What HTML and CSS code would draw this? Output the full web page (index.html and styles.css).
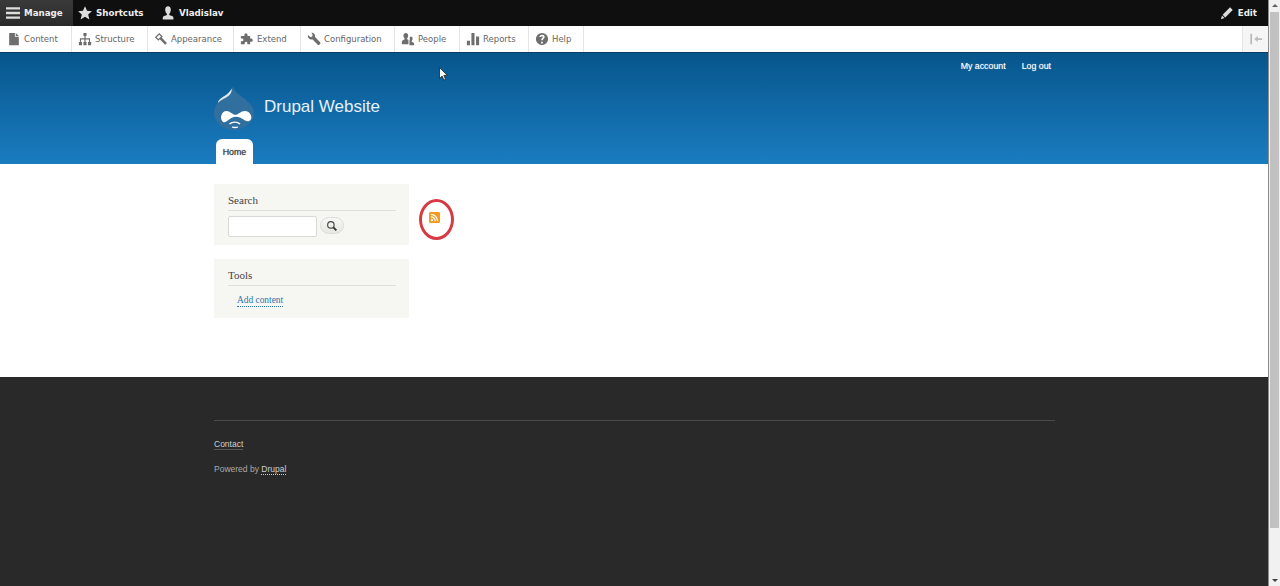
FILE: index.html
```html
<!DOCTYPE html>
<html lang="en">
<head>
<meta charset="utf-8">
<title>Drupal Website</title>
<link rel="stylesheet" href="styles.css">
</head>
<body>
<div class="viewport">
  <div class="page">
    <div class="toolbar">
      <a class="tb-item tb-manage"><svg class="tb-icon" viewBox="0 0 16 16"><path d="M0 1.500h16v2.600H0zM0 6.700h16v2.600H0zM0 11.900h16v2.600H0z"/></svg>Manage</a>
      <a class="tb-item tb-short"><svg class="tb-icon" viewBox="0 0 16 16"><path d="M8 .3l2.300 5.200 5.600.5-4.300 3.700 1.400 5.600L8 12.400l-5 2.900 1.400-5.600L.1 6l5.600-.5z"/></svg>Shortcuts</a>
      <a class="tb-item tb-user"><svg class="tb-icon" viewBox="0 0 16 16"><path d="M8 .3c2 0 3.200 1.500 3.200 3.900 0 1.900-.8 3.800-1.700 4.600v1.400c1 .6 4 1 4.500 2.400.2.700.2 1.600.2 2.700H2c0-1.100 0-2 .2-2.700.5-1.400 3.500-1.800 4.500-2.400V8.800C5.600 8 4.800 6.100 4.800 4.200 4.800 1.800 6 .3 8 .3z"/></svg>Vladislav</a>
      <a class="tb-item tb-edit"><svg class="tb-icon" viewBox="0 0 16 16"><path d="M11.500 1.500l3 3-8.500 8.500-3-3zM2.300 10.800l2.900 2.900L1 15z"/></svg>Edit</a>
    </div>
    <nav class="tray">
      <a class="tray-item"><svg class="tray-icon" viewBox="0 0 16 16"><path d="M2.500 1h6.500v4.500h4.500V15h-11zM10 1l3.500 3.500H10z"/></svg>Content</a>
      <a class="tray-item"><svg class="tray-icon" viewBox="0 0 16 16"><path d="M6.200 1h3.600v3.600H8.700v2.600h5.100v4.200H15V15h-3.600v-3.600h1.100V8.500H8.700v2.900h1.100V15H6.200v-3.600h1.100V8.500H3.500v2.900h1.100V15H1v-3.600h1.200V7.200h5.100V4.600H6.200z"/></svg>Structure</a>
      <a class="tray-item"><svg class="tray-icon" viewBox="0 0 16 16"><path d="M1 6l5-5 4 4-1.300 1.300L14.800 12.500 12.700 14.700 6.600 8.400 5 10z" fill-rule="evenodd"/><path class="tray-cut" d="M3 6l3-3 2 2-3 3z"/></svg>Appearance</a>
      <a class="tray-item"><svg class="tray-icon" viewBox="0 0 16 16"><path d="M1 4.500h4V3.200a1.800 1.800 0 1 1 3.600 0v1.300h3v3h1.200a1.800 1.800 0 1 1 0 3.600h-1.200v3H8.400v-1.500a1.500 1.500 0 1 0-3 0v1.500H1v-3.400h1.200a1.700 1.700 0 1 0 0-3.400H1z"/></svg>Extend</a>
      <a class="tray-item"><svg class="tray-icon" viewBox="0 0 16 16"><path d="M5 .8c2.300-.4 4.300 1.300 4.200 3.600 0 .4-.1.700-.2 1l6 6.300c.5.600.5 1.400 0 1.900l-.9.900c-.5.500-1.300.5-1.800 0L6.100 8.300c-2.300.8-5-.9-5.200-3.500 0-.5 0-1 .2-1.400l2.600 2.400 2.200-.4.500-2.200z"/></svg>Configuration</a>
      <a class="tray-item"><svg class="tray-icon" viewBox="0 0 16 16"><path d="M5.500 1c1.700 0 2.700 1.300 2.700 3 0 1.400-.6 2.700-1.300 3.300v1c.5.300 1 .5 1.600.7v5H1V11c0-1.300 2.300-1.800 3.200-2.700V7.300C3.400 6.600 2.800 5.400 2.800 4c0-1.700 1-3 2.700-3zM11 5c1.400 0 2.300 1.100 2.300 2.500 0 1.100-.5 2.100-1.100 2.700v.8c.8.500 2.800.9 2.800 2v2H9.700V9.500c.1-.4.300-.7.500-.9-.5-1.800-.2-3.600.8-3.600z"/></svg>People</a>
      <a class="tray-item"><svg class="tray-icon" viewBox="0 0 16 16"><path d="M1 10h3.500v5H1zM6.200 1h3.500v14H6.200zM11.500 5H15v10h-3.500z"/></svg>Reports</a>
      <a class="tray-item"><svg class="tray-icon" viewBox="0 0 16 16"><path fill-rule="evenodd" d="M8 1a7 7 0 1 1 0 14A7 7 0 0 1 8 1zM7 11v2h2v-2zM8 3C6.300 3 5 4 5 5.800h2c0-.6.400-1 1-1s1 .4 1 .9c0 1-2 1.300-2 3.500v.3h2v-.3c0-1.200 2-1.600 2-3.700C11 4 9.700 3 8 3z"/></svg>Help</a>
      <span class="tray-space"></span>
      <a class="tray-toggle"><svg viewBox="0 0 16 16" class="tray-toggle-icon"><path d="M1.500 2h2v12h-2zM6 8l4-3.500V7h5v2h-5v2.500z"/></svg></a>
    </nav>
    <header class="site-header">
      <div class="wrap">
        <div class="secondary"><a>My account</a><a>Log out</a></div>
        <div class="branding">
          <svg class="logo" viewBox="0 0 40 44"><path fill="#316f9f" d="M19 0C20 6 26 9 31 13 36 17 40 22 40 27 40 36 31 44 20 44 9 44 0 36 0 27 0 20 5 14 11 11 15 8 18 5 19 0z"/><path fill="#dbe9f3" d="M17.500 2.500C16 6 13 8.500 9.500 10.500 6.500 12.300 4 14.500 3.800 17 7 13.500 11.500 12.500 15 9.500 17 7.800 18.300 5 17.500 2.500z"/><path fill="#fff" d="M9 36C5 32.500 7.500 25 12.500 25c3.500 0 6 3.800 9 3.800 2.800 0 5-3.800 9.500-3.800 5 0 8 6 5.500 9-1.700 2.200-4.500 1.400-7-.4-2-1.500-5-2.800-7.500-2.800-3 0-5.500 1.700-7.500 3.300C12.500 35.700 10.500 37 9 36z"/><path fill="none" stroke="#fff" stroke-width="1.300" d="M15.500 38c2.700-2.600 8-2.600 10.500 0M18 41c2 .7 4 .7 6 0"/></svg>
          <span class="site-name">Drupal Website</span>
        </div>
        <div class="tabs"><a class="tab">Home</a></div>
      </div>
    </header>
    <main class="content">
      <div class="wrap columns">
        <aside class="sidebar">
          <section class="block block-search">
            <h2 class="block-title">Search</h2>
            <form class="search">
              <span class="search-input"></span>
              <span class="search-btn"><svg viewBox="0 0 16 16" class="search-icon"><circle cx="6.500" cy="6.500" r="4.300" fill="none" stroke="#444" stroke-width="1.500"/><path d="M9.800 9.800l4 4" stroke="#333" stroke-width="2.400"/></svg></span>
            </form>
          </section>
          <section class="block">
            <h2 class="block-title">Tools</h2>
            <a class="tool-link">Add content</a>
          </section>
        </aside>
        <div class="feed">
          <svg class="rss" viewBox="0 0 12 12"><rect width="12" height="12" rx="1.500" fill="#f39a1f"/><circle cx="3.200" cy="8.800" r="1.300" fill="#fff"/><path d="M2 5.200a4.800 4.800 0 0 1 4.800 4.800M2 2.600A7.400 7.400 0 0 1 9.400 10" fill="none" stroke="#fff" stroke-width="1.400"/></svg>
          <span class="ring"></span>
        </div>
      </div>
    </main>
    <footer class="site-footer">
      <div class="wrap">
        <div class="foot-rule"></div>
        <div class="foot-menu"><a>Contact</a></div>
        <div class="foot-power">Powered by <a>Drupal</a></div>
      </div>
    </footer>
    <svg class="cursor" viewBox="0 0 9 14"><path d="M.5.500v11l2.600-2.400 1.800 4 1.700-.8-1.800-3.900H8.300z" fill="#fff" stroke="#222" stroke-width=".8"/></svg>
  </div>
  <div class="scrollbar">
    <span class="sb-arrow sb-up"></span>
    <span class="sb-thumb"></span>
    <span class="sb-arrow sb-down"></span>
  </div>
</div>
</body>
</html>
```
FILE: styles.css
```css
* { box-sizing: border-box; }
html, body { margin: 0; height: 586px; overflow: hidden; }
body { font-family: "Liberation Sans", Arial, sans-serif; background: #fff; }
a { color: inherit; text-decoration: none; }

.viewport { display: flex; width: 1280px; height: 586px; }
.page { position: relative; flex: 0 0 1269px; display: flex; flex-direction: column; height: 586px; overflow: hidden; border-right: 1px solid #8c8c8c; }

.toolbar { display: flex; align-items: center; height: 26px; background: #0f0f0f; color: #eee; font: bold 8.700px "DejaVu Sans", sans-serif; }
.tb-item { display: flex; align-items: center; height: 26px; }
.tb-icon { width: 14px; height: 14px; fill: #ddd; margin-right: 4px; flex: none; }
.tb-manage { width: 73px; padding-left: 6px; background: linear-gradient(#3a3a3a, #2a2a2a); }
.tb-short { margin-left: 5px; width: 83px; }
.tb-edit { margin-left: auto; margin-right: 11px; }

.tray { display: flex; height: 27px; background: #fff; border-bottom: 1px solid #0d3c60; font: 8.500px/27px "DejaVu Sans", sans-serif; color: #666; }
.tray-item { display: flex; align-items: center; padding-left: 6px; border-right: 1px solid #e5e5e5; }
.tray-item:nth-child(1) { width: 72px; padding-left: 7px; }
.tray-item:nth-child(2) { width: 76px; }
.tray-item:nth-child(3) { width: 86px; }
.tray-item:nth-child(4) { width: 67px; }
.tray-item:nth-child(5) { width: 94px; }
.tray-item:nth-child(6) { width: 65px; }
.tray-item:nth-child(7) { width: 69px; }
.tray-item:nth-child(8) { width: 55px; }
.tray-icon { width: 14px; height: 14px; fill: #6e6e6e; margin-right: 3px; flex: none; }
.tray-cut { fill: #fff; }
.tray-space { flex: 1; }
.tray-toggle { display: flex; align-items: center; justify-content: center; width: 26px; background: #f5f5f5; border-left: 1px solid #e5e5e5; }
.tray-toggle-icon { width: 14px; height: 14px; fill: #bbb; }

.wrap { width: 841px; margin-left: 214px; }
.site-header { height: 111px; background: linear-gradient(#07568c, #1a7cc0); color: #fff; }
.secondary { display: flex; justify-content: flex-end; gap: 16px; padding: 8px 4px 0 0; font-size: 8.800px; line-height: 10px; height: 33px; color: #fff; text-shadow: 0 0 1px rgba(255,255,255,.6); }
.branding { display: flex; align-items: center; height: 44px; }
.logo { width: 40px; height: 44px; flex: none; }
.site-name { margin-left: 10px; font-size: 17px; color: #e6f1f8; position: relative; top: -1px; }
.tabs { display: flex; margin-top: 9px; padding-left: 2px; }
.tab { display: flex; align-items: center; justify-content: center; width: 37px; height: 25px; background: #fff; border-radius: 6px 6px 0 0; color: #333; font-size: 8.800px; text-shadow: 0 0 1px rgba(40,40,40,.6); }

.content { height: 213px; background: #fff; }
.columns { display: flex; padding-top: 20px; }
.sidebar { width: 195px; flex: none; display: flex; flex-direction: column; gap: 14px; }
.block { background: #f6f6f2; padding: 10px 13px 0 14px; height: 59px; }
.block-search { height: 61px; }
.block-title { margin: 0; height: 17px; border-bottom: 1px solid #e0e0dc; font: normal 11px/13px "Liberation Serif", serif; color: #444; }
.search { display: flex; align-items: flex-start; margin-top: 5px; }
.search-input { width: 89px; height: 21px; background: #fff; border: 1px solid #d8d8d4; border-radius: 2px; }
.search-btn { display: flex; align-items: center; justify-content: center; width: 24px; height: 17px; margin: 1px 0 0 3px; border: 1px solid #dcdcd8; border-radius: 9px; background: linear-gradient(#f8f8f6, #e6e6e2); }
.search-icon { width: 12px; height: 12px; }
.tool-link { display: inline-block; margin: 9px 0 0 9px; font: 9.400px/11px "Liberation Serif", serif; color: #2a76ad; border-bottom: 1px dotted #2a76ad; }

.feed { position: relative; flex: 1; }
.rss { width: 11px; height: 11px; display: block; margin: 28px 0 0 20px; }
.ring { position: absolute; left: 10px; top: 15px; width: 35px; height: 41px; border: 3px solid #d63a44; border-radius: 50%; }

.site-footer { flex: 1; background: #292929; color: #b5b5b5; font-size: 8.500px; line-height: 11px; }
.foot-rule { margin-top: 43px; height: 1px; background: #4a4a4a; }
.foot-menu { margin-top: 18px; color: #d0d0d0; }
.foot-menu a { border-bottom: 1px solid #555; }
.foot-power { margin-top: 14px; color: #aaa; }
.foot-power a { color: #d0d0d0; border-bottom: 1px dotted #ccc; }

.cursor { position: absolute; left: 439px; top: 67px; width: 9px; height: 14px; }

.scrollbar { flex: 1; display: flex; flex-direction: column; align-items: center; background: #f1f1f1; }
.sb-arrow { flex: none; width: 0; height: 0; margin: 5px 0; border-left: 3px solid transparent; border-right: 3px solid transparent; }
.sb-up { border-bottom: 3px solid #606060; margin-top: 4px; }
.sb-down { border-top: 3px solid #404040; margin-top: auto; margin-bottom: 4px; }
.sb-thumb { width: 9px; height: 516px; background: #c1c1c1; }
```
